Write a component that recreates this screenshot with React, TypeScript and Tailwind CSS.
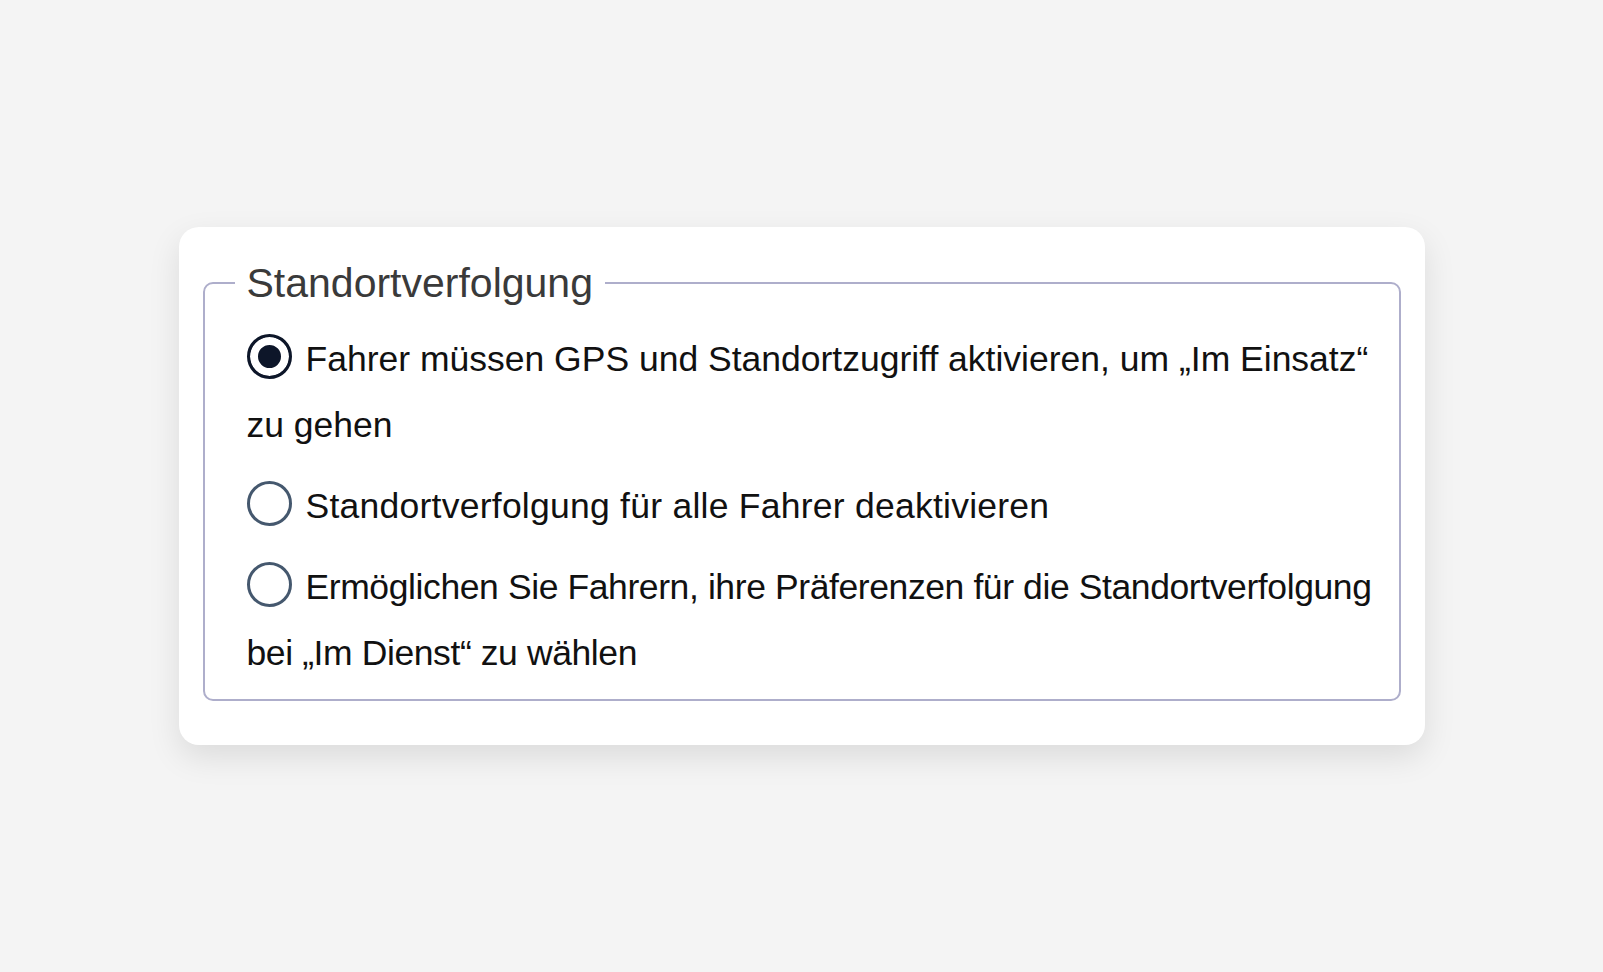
import { useState } from "react";

const options = [
  {
    id: "required",
    label: "Fahrer müssen GPS und Standortzugriff aktivieren, um „Im Einsatz“ zu gehen",
    tracking: "tracking-normal",
  },
  {
    id: "disabled",
    label: "Standortverfolgung für alle Fahrer deaktivieren",
    tracking: "tracking-[0.25px]",
  },
  {
    id: "driver-choice",
    label:
      "Ermöglichen Sie Fahrern, ihre Präferenzen für die Standortverfolgung bei „Im Dienst“ zu wählen",
    tracking: "tracking-[-0.4px]",
  },
];

export default function App() {
  const [selected, setSelected] = useState("required");

  return (
    <div className="min-h-screen bg-[#f4f4f4] flex items-center justify-center font-['Liberation_Sans',Arial,sans-serif]">
      <div className="w-[1246px] bg-white rounded-[20px] shadow-[0_12px_32px_rgba(0,0,0,0.10)] px-6 pt-[32px] pb-[44px]">
        <fieldset className="border-2 border-[#aeaecb] rounded-[10px] pl-[30px] pr-2 pb-[13px]">
          <legend className="px-3 text-[41px] leading-[48px] text-[#3a3a3a]">
            Standortverfolgung
          </legend>

          <div className="mt-[19px] pl-3 flex flex-col gap-[15px]">
            {options.map((opt) => {
              const checked = selected === opt.id;
              return (
                <label
                  key={opt.id}
                  className={`block text-[35.5px] leading-[66px] text-[#111111] cursor-pointer ${opt.tracking}`}
                >
                  <input
                    type="radio"
                    name="tracking"
                    value={opt.id}
                    checked={checked}
                    onChange={() => setSelected(opt.id)}
                    className="sr-only"
                  />
                  <span
                    className={`inline-block w-[45px] h-[45px] rounded-full border-[3px] mr-[14px] align-[-8px] ${
                      checked
                        ? "border-[#0d1629] bg-[#0d1629] shadow-[inset_0_0_0_8px_#ffffff]"
                        : "border-[#45586e] bg-white"
                    }`}
                  />
                  {opt.label}
                </label>
              );
            })}
          </div>
        </fieldset>
      </div>
    </div>
  );
}
